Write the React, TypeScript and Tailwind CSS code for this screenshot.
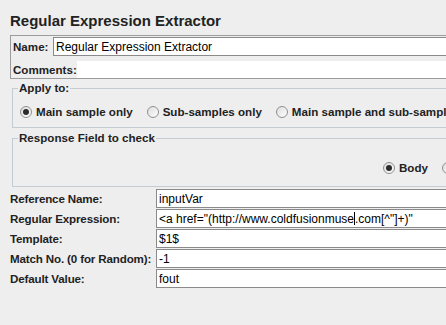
import React from "react";

function Radio({ checked = false }: { checked?: boolean }) {
  return (
    <svg width="12" height="12" viewBox="0 0 12 12" className="shrink-0">
      <defs>
        <linearGradient id={checked ? "rg-on" : "rg-off"} x1="0" y1="0" x2="1" y2="1">
          <stop offset="0" stopColor="#dcdcdc" />
          <stop offset="1" stopColor="#ffffff" />
        </linearGradient>
      </defs>
      <circle cx="6" cy="6" r="5.5" fill={`url(#${checked ? "rg-on" : "rg-off"})`} stroke="#8d8f91" />
      {checked && <circle cx="6" cy="6" r="3" fill="#2b2b2b" />}
    </svg>
  );
}

function RadioItem({ label, checked }: { label: string; checked?: boolean }) {
  return (
    <span className="flex shrink-0 items-center gap-[4px] whitespace-nowrap font-bold">
      <Radio checked={checked} />
      {label}
    </span>
  );
}

const rows: { label: string; value: React.ReactNode }[] = [
  { label: "Reference Name:", value: "inputVar" },
  {
    label: "Regular Expression:",
    value: (
      <>
        {'<a href="(http://www.coldfusionmuse'}
        <span className="h-[13px] border-l border-black" />
        {'.com[^"]+)"'}
      </>
    ),
  },
  { label: "Template:", value: "$1$" },
  { label: "Match No. (0 for Random):", value: "-1" },
  { label: "Default Value:", value: "fout" },
];

export default function App() {
  return (
    <div className="h-[325px] w-[446px] overflow-hidden bg-[#eeeeee] font-['Liberation_Sans',Arial,sans-serif] text-[11.6px] leading-[14px] text-[#222]">
      <h1 className="pl-[10px] pt-[11px] text-[15px] font-bold leading-[20px]">Regular Expression Extractor</h1>

      <div className="ml-[10px] mt-[4px] w-[480px] border-b border-l border-t border-[#9c9c9c] pt-[1px]">
        <div className="flex h-[19px] items-center">
          <span className="w-[42px] shrink-0 pl-[2px] font-bold">Name:</span>
          <div className="flex h-[19px] flex-1 items-center border border-[#8a8a8a] bg-white pl-[2px] text-[12px] text-black">
            Regular Expression Extractor
          </div>
        </div>
        <div className="mt-[5px] flex h-[17px] items-center">
          <span className="w-[66px] shrink-0 pl-[2px] font-bold">Comments:</span>
          <div className="h-[17px] flex-1 bg-white" />
        </div>
      </div>

      <fieldset className="ml-[12px] mt-[2px] w-[480px] border border-[#c3cbd3] pb-[8px]">
        <legend className="ml-[5px] px-[1px] font-bold leading-[14px]">Apply to:</legend>
        <div className="mt-[10px] flex h-[14px] items-center gap-[14px] pl-[7px]">
          <RadioItem label="Main sample only" checked />
          <RadioItem label="Sub-samples only" />
          <RadioItem label="Main sample and sub-samples" />
        </div>
      </fieldset>

      <fieldset className="ml-[12px] mt-[3px] w-[480px] border border-[#c3cbd3] pb-[11px]">
        <legend className="ml-[5px] px-[1px] font-bold leading-[14px]">Response Field to check</legend>
        <div className="mt-[16px] flex h-[14px] items-center gap-[14px] pl-[370px]">
          <RadioItem label="Body" checked />
          <RadioItem label="Body (unescaped)" />
        </div>
      </fieldset>

      <div className="mt-[2px] flex w-[480px] flex-col gap-[1px] pl-[10px]">
        {rows.map((row) => (
          <div key={row.label} className="flex h-[19px] items-center">
            <span className="w-[146px] shrink-0 whitespace-nowrap font-bold tracking-[-0.15px]">{row.label}</span>
            <div className="flex h-[19px] flex-1 items-center whitespace-nowrap border border-[#8a8a8a] bg-white pl-[2px] text-[12px] text-black">
              {row.value}
            </div>
          </div>
        ))}
      </div>
    </div>
  );
}
